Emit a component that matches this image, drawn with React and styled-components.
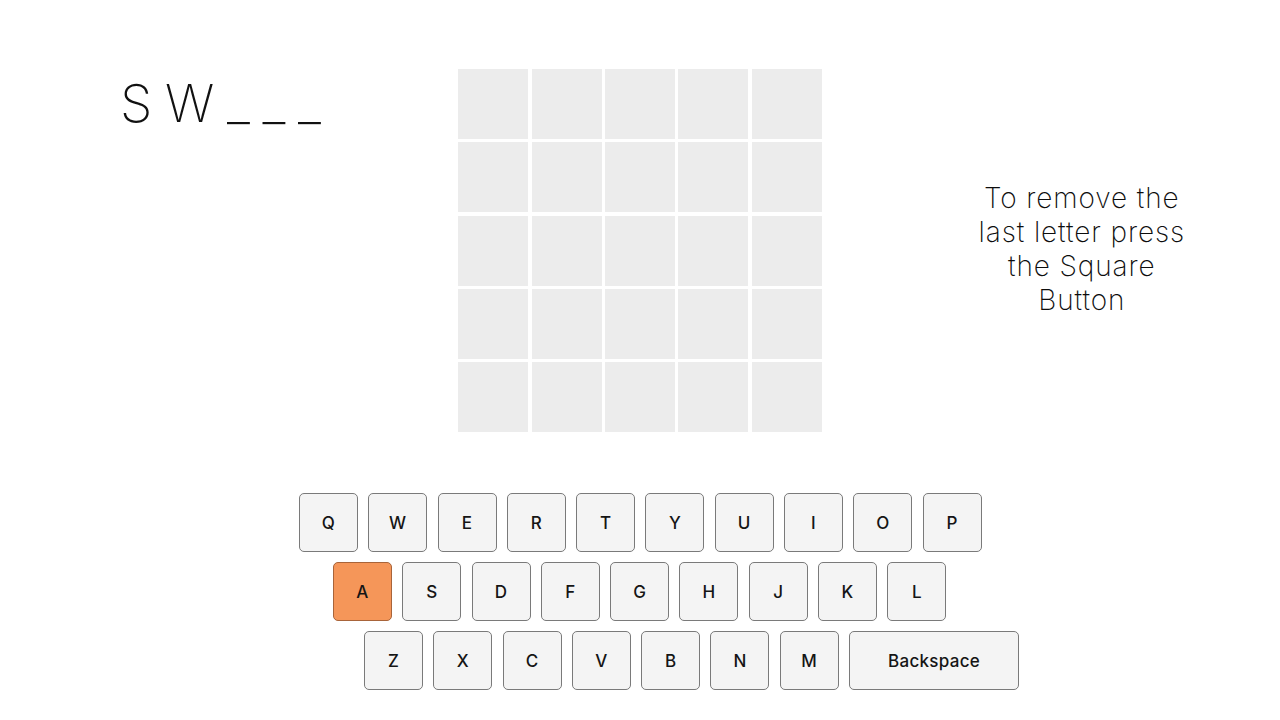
import React from 'react';
import styled, { createGlobalStyle } from 'styled-components';

const GlobalStyle = createGlobalStyle`
  html, body {
    margin: 0;
    padding: 0;
    background: #ffffff;
  }
  body {
    font-family: Inter, "Open Sans", "Liberation Sans", sans-serif;
    color: #111;
  }
`;

const ROWS = [
  { indent: 0, keys: ['Q', 'W', 'E', 'R', 'T', 'Y', 'U', 'I', 'O', 'P'] },
  { indent: 34, keys: ['A', 'S', 'D', 'F', 'G', 'H', 'J', 'K', 'L'] },
  { indent: 65, keys: ['Z', 'X', 'C', 'V', 'B', 'N', 'M', 'Backspace'] },
];

const USED = ['A'];

const App = () => {
  return (
    <Page>
      <GlobalStyle />
      <Top>
        <Word>S W _ _ _</Word>
        <Board>
          {Array.from({ length: 25 }).map((_, i) => (
            <Cell key={i} />
          ))}
        </Board>
        <Hint>
          To remove the
          <br />
          last letter press
          <br />
          the Square
          <br />
          Button
        </Hint>
      </Top>
      <Keyboard>
        {ROWS.map((row, r) => (
          <KeyRow key={r} $indent={row.indent}>
            {row.keys.map((k) => (
              <Key key={k} $wide={k === 'Backspace'} $used={USED.includes(k)}>
                {k}
              </Key>
            ))}
          </KeyRow>
        ))}
      </Keyboard>
    </Page>
  );
};

const Page = styled.div`
  width: 1280px;
  height: 720px;
  display: flex;
  flex-direction: column;
  align-items: center;
  padding-top: 69px;
  box-sizing: border-box;
  overflow: hidden;
`;

const Top = styled.div`
  width: 100%;
  display: grid;
  grid-template-columns: 1fr auto 1fr;
`;

const Word = styled.div`
  align-self: start;
  padding-left: 120px;
  margin-top: 5px;
  font-size: 52px;
  font-weight: 200;
  letter-spacing: 0;
  word-spacing: -2px;
  line-height: 60px;
  white-space: pre;
`;

const Board = styled.div`
  display: grid;
  grid-template-columns: repeat(5, 70px);
  grid-auto-rows: 70px;
  gap: 3.3px;
`;

const Cell = styled.div`
  background: #ececec;
`;

const Hint = styled.div`
  align-self: center;
  justify-self: center;
  margin-left: 62px;
  margin-top: -3px;
  text-align: center;
  font-size: 28px;
  font-weight: 200;
  line-height: 34px;
  letter-spacing: 0.9px;
  color: #0d0d0d;
`;

const Keyboard = styled.div`
  margin-top: 61px;
  width: 100%;
  padding-left: 299px;
  box-sizing: border-box;
  display: flex;
  flex-direction: column;
  gap: 10px;
`;

const KeyRow = styled.div`
  display: flex;
  gap: 10.3px;
  padding-left: ${(p) => p.$indent}px;
`;

const Key = styled.div`
  width: ${(p) => (p.$wide ? '170px' : '59px')};
  height: 59px;
  box-sizing: border-box;
  display: flex;
  align-items: center;
  justify-content: center;
  border: 1px solid ${(p) => (p.$used ? '#a8643a' : '#7a7a7a')};
  border-radius: 5px;
  background: ${(p) => (p.$used ? '#f59659' : '#f4f4f4')};
  font-size: 17px;
  font-weight: 500;
  letter-spacing: 0.3px;
  color: #151515;
`;

export default App;
